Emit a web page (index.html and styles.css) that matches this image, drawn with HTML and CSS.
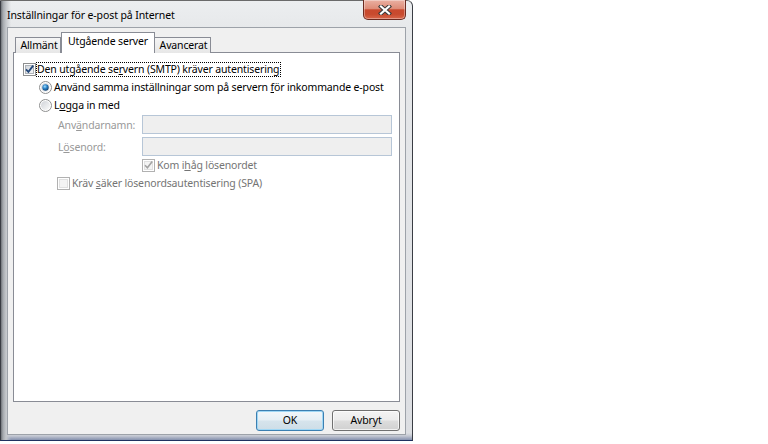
FILE: index.html
```html
<!DOCTYPE html>
<html lang="sv">
<head>
<meta charset="utf-8">
<title>Inställningar för e-post på Internet</title>
<link rel="stylesheet" href="styles.css">
</head>
<body>
<div class="window">
  <div class="titlebar"><span class="title">Inställningar för e-post på Internet</span></div>
  <div class="close" aria-label="Stäng">
    <svg width="14" height="10" viewBox="0 0 14 10">
      <path d="M3 1.5 L11 8.5 M11 1.5 L3 8.5" stroke="#3a3a3a" stroke-width="4.2" stroke-linecap="square" fill="none"/>
      <path d="M3 1.5 L11 8.5 M11 1.5 L3 8.5" stroke="#ffffff" stroke-width="2.2" stroke-linecap="square" fill="none"/>
    </svg>
  </div>
  <div class="client">
    <div class="tabs">
      <div class="tab tab-allm">Allmänt</div>
      <div class="tab tab-sel">Utgående server</div>
      <div class="tab tab-avanc">Avancerat</div>
    </div>
    <div class="panel">
      <div class="row row-auth">
        <svg class="box" width="13" height="13" viewBox="0 0 13 13">
          <defs><linearGradient id="cbg" x1="0" y1="0" x2="1" y2="1"><stop offset="0" stop-color="#cfd4da"/><stop offset="1" stop-color="#f7f8f9"/></linearGradient></defs>
          <rect x="0.5" y="0.5" width="12" height="12" fill="#fff" stroke="#8e8f8f"/>
          <rect x="2.5" y="2.5" width="8" height="8" fill="url(#cbg)" stroke="#aeb3b9"/>
          <path d="M3 6.3 L5.4 8.8 L10.2 2.6" stroke="#24487a" stroke-width="1.8" fill="none"/>
        </svg>
        <span class="focus">Den utgående se<u>r</u>vern (SMTP) kräver autentisering</span>
      </div>
      <div class="row row-opt">
        <svg class="box" width="13" height="13" viewBox="0 0 13 13">
          <defs>
            <linearGradient id="rbg" x1="0" y1="0" x2="1" y2="1"><stop offset="0" stop-color="#d0d3d8"/><stop offset="1" stop-color="#fbfbfb"/></linearGradient>
            <radialGradient id="dot" cx="0.4" cy="0.35" r="0.7"><stop offset="0" stop-color="#a6defa"/><stop offset="0.45" stop-color="#2d86cc"/><stop offset="1" stop-color="#0f3b68"/></radialGradient>
          </defs>
          <circle cx="6.5" cy="6.5" r="6" fill="#fff" stroke="#8e8f8f"/>
          <circle cx="6.5" cy="6.5" r="4.5" fill="url(#rbg)"/>
          <circle cx="6.5" cy="6.5" r="3.2" fill="url(#dot)"/>
        </svg>
        <span class="lbl">Använd samma inställningar som på servern <u>f</u>ör inkommande e-post</span>
      </div>
      <div class="row row-opt">
        <svg class="box" width="13" height="13" viewBox="0 0 13 13">
          <circle cx="6.5" cy="6.5" r="6" fill="#fff" stroke="#8e8f8f"/>
          <circle cx="6.5" cy="6.5" r="4.5" fill="url(#rbg)"/>
        </svg>
        <span class="lbl">L<u>o</u>gga in med</span>
      </div>
      <div class="field field-first">
        <span class="flabel">Anv<u>ä</u>ndarnamn:</span>
        <span class="input"></span>
      </div>
      <div class="field field-second">
        <span class="flabel">L<u>ö</u>senord:</span>
        <span class="input"></span>
      </div>
      <div class="row row-remember">
        <svg class="box" width="13" height="13" viewBox="0 0 13 13">
          <rect x="0.5" y="0.5" width="12" height="12" fill="#fff" stroke="#b1b1b1"/>
          <rect x="2.5" y="2.5" width="8" height="8" fill="#f4f4f4" stroke="#e0e0e0"/>
          <path d="M3 6.3 L5.4 8.8 L10.2 2.6" stroke="#a3a3a3" stroke-width="1.6" fill="none"/>
        </svg>
        <span class="lbl dis">Kom i<u>h</u>åg lösenordet</span>
      </div>
      <div class="row row-spa">
        <svg class="box" width="13" height="13" viewBox="0 0 13 13">
          <rect x="0.5" y="0.5" width="12" height="12" fill="#fff" stroke="#b1b1b1"/>
          <rect x="2.5" y="2.5" width="8" height="8" fill="#f4f4f4" stroke="#e0e0e0"/>
        </svg>
        <span class="lbl dis">Kräv <u>s</u>äker lösenordsautentisering (SPA)</span>
      </div>
    </div>
    <div class="buttons">
      <button class="btn btn-default">OK</button>
      <button class="btn">Avbryt</button>
    </div>
  </div>
</div>
</body>
</html>
```
FILE: styles.css
```css
* { box-sizing: border-box; }

html, body {
  margin: 0;
  padding: 0;
  background: #ffffff;
}

body {
  font-family: "Noto Sans", "Open Sans", sans-serif;
  font-size: 10.5px;
  letter-spacing: -0.15px;
  color: #000;
  white-space: nowrap;
}

u { text-decoration: underline; text-underline-offset: 1px; }

.window {
  position: relative;
  width: 413px;
  height: 441px;
  display: flex;
  flex-direction: column;
  border: 1px solid #3a3d44;
  border-bottom-color: #1f3160;
  border-top-color: #6a6a6a;
  border-top-right-radius: 6px;
  padding: 0 6px 5px 6px;
  background:
    linear-gradient(to right, #6f7378 0px, #a4a8ad 2px, #c4c7cb 5px, rgba(233,234,236,0) 10px),
    linear-gradient(to top, rgba(60,80,130,0.55) 0px, rgba(120,130,160,0.25) 4px, rgba(0,0,0,0) 7px),
    linear-gradient(to bottom, #eceef0 0px, #e6e8ea 30px, #dcdee2 100%);
}

.titlebar {
  height: 26px;
  display: flex;
  align-items: center;
  flex-shrink: 0;
}

.title {
  font-size: 10.5px;
  letter-spacing: -0.1px;
  line-height: 26px;
  padding-top: 1px;
  color: #000;
}

.close {
  position: absolute;
  top: -1px;
  right: 6px;
  width: 43px;
  height: 20px;
  border: 1px solid #6b2a20;
  border-top: none;
  border-radius: 0 0 5px 5px;
  background: linear-gradient(to bottom, #eab0a2 0%, #de8c78 45%, #c9492e 52%, #c84a2e 75%, #d8664a 100%);
  box-shadow: inset 0 0 0 1px rgba(255,255,255,0.35);
  display: flex;
  align-items: center;
  justify-content: center;
}

.client {
  flex: 1;
  display: flex;
  flex-direction: column;
  background: #f0f0f0;
  border: 1px solid #9da2a9;
  padding: 0 5px 3px 5px;
}

.tabs {
  display: flex;
  align-items: flex-end;
  height: 25px;
  margin-left: 2px;
  margin-bottom: -1px;
  position: relative;
  z-index: 1;
}

.tab {
  height: 16px;
  border: 1px solid #898c95;
  border-bottom: none;
  background: linear-gradient(to bottom, #f5f5f5, #e7e7e7);
  display: flex;
  align-items: center;
  justify-content: center;
  line-height: 1;
  padding-left: 2px;
}

.tab-allm { width: 46px; }
.tab-avanc { width: 56px; border-left: none; }

.tab-sel {
  width: 94px;
  height: 21px;
  background: #ffffff;
  border-left: 1px solid #898c95;
  padding-bottom: 3px;
  padding-left: 0;
}

.panel {
  height: 350px;
  background: #ffffff;
  border: 1px solid #898c95;
  padding-top: 7px;
  flex-shrink: 0;
}

.row {
  display: flex;
  align-items: center;
  height: 18px;
}

.box { flex-shrink: 0; display: block; }

.row-auth { padding-left: 9px; }

.focus {
  border: 1px dotted #000;
  padding: 0 1px 1px 0;
  line-height: 12px;
}

.row-opt { padding-left: 25px; }
.row-opt .lbl { margin-left: 2px; }

.field {
  display: flex;
  align-items: center;
  height: 19px;
  padding-left: 44px;
}

.field-first { margin-top: 1px; }
.field-second { margin-top: 3px; }

.flabel {
  width: 84px;
  color: #999999;
}

.input {
  width: 250px;
  height: 19px;
  border: 1px solid #b7c6d7;
  background: #efefef;
}

.row-remember { padding-left: 128px; }
.row-remember .lbl { margin-left: 2px; }

.row-spa { padding-left: 43px; }
.row-spa .lbl { margin-left: 2px; }

.dis { color: #747474; }

.buttons {
  display: flex;
  justify-content: flex-end;
  gap: 8px;
  margin-top: 8px;
}

.btn {
  width: 68px;
  height: 21px;
  font-family: "Noto Sans", "Open Sans", sans-serif;
  font-size: 10.5px;
  letter-spacing: -0.15px;
  color: #000;
  border: 1px solid #707070;
  border-radius: 3px;
  background: linear-gradient(to bottom, #f4f4f4 0%, #ececec 48%, #dddddd 52%, #d0d0d0 100%);
  box-shadow: inset 0 0 0 1px rgba(255,255,255,0.7);
  padding: 0;
  line-height: 1;
}

.btn-default {
  border-color: #3c7fb1;
  background: linear-gradient(to bottom, #f2f7fa 0%, #e6eff5 48%, #d6e4ec 52%, #cddde7 100%);
  box-shadow: inset 0 0 0 1px #9fd7f5;
}
```
